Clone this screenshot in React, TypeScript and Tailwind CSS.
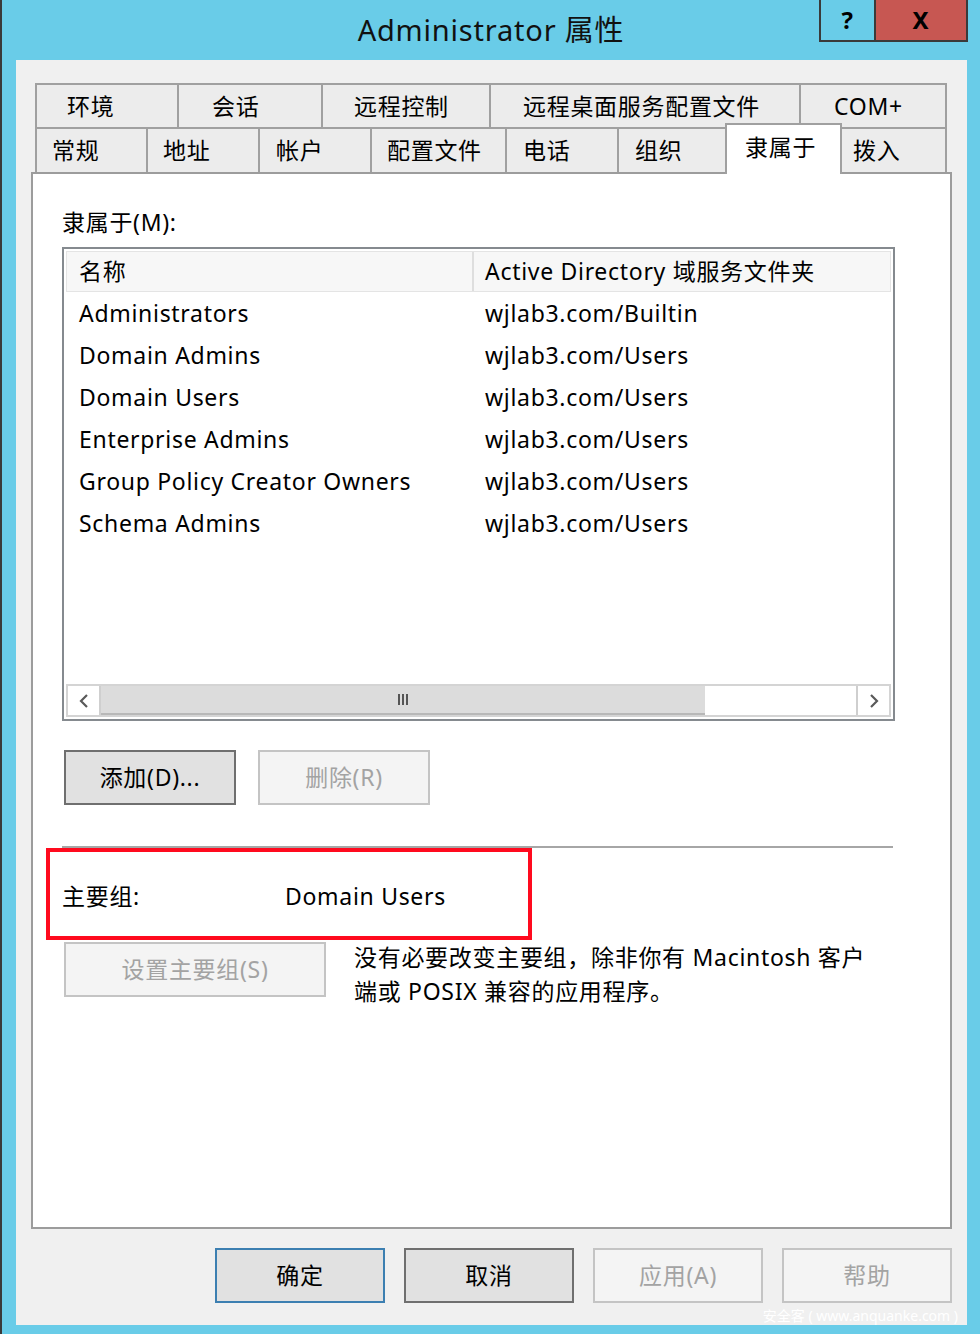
const FONT = "font-['Noto_Sans','Noto_Sans_CJK_SC',sans-serif]";

const rowOne = [
  { label: "环境", w: "w-[142px]", pl: "pl-[30px]" },
  { label: "会话", w: "w-[144px]", pl: "pl-[33px]" },
  { label: "远程控制", w: "w-[168px]", pl: "pl-[31px]" },
  { label: "远程桌面服务配置文件", w: "w-[310px]", pl: "pl-[32px]" },
  { label: "COM+", w: "w-[148px]", pl: "pl-[33px]" },
];

const rowTwo = [
  { label: "常规", w: "w-[111px]", pl: "pl-[15px]" },
  { label: "地址", w: "w-[112px]", pl: "pl-[15px]" },
  { label: "帐户", w: "w-[112px]", pl: "pl-[16px]" },
  { label: "配置文件", w: "w-[135px]", pl: "pl-[15px]" },
  { label: "电话", w: "w-[112px]", pl: "pl-[16px]" },
  { label: "组织", w: "w-[108px]", pl: "pl-[16px]" },
  { label: "隶属于", w: "w-[117px]", pl: "pl-[18px]", active: true },
  { label: "拨入", w: "w-[105px]", pl: "pl-[11px]" },
];

const groups = [
  ["Administrators", "wjlab3.com/Builtin"],
  ["Domain Admins", "wjlab3.com/Users"],
  ["Domain Users", "wjlab3.com/Users"],
  ["Enterprise Admins", "wjlab3.com/Users"],
  ["Group Policy Creator Owners", "wjlab3.com/Users"],
  ["Schema Admins", "wjlab3.com/Users"],
];

const Chevron = ({ dir }: { dir: "left" | "right" }) => (
  <svg width="12" height="16" viewBox="0 0 12 16">
    <polyline
      points={dir === "left" ? "9,2 3,8 9,14" : "3,2 9,8 3,14"}
      fill="none"
      stroke="#5a5a5a"
      strokeWidth="2.2"
    />
  </svg>
);

const Button = ({
  label,
  width,
  kind,
}: {
  label: string;
  width: string;
  kind: "normal" | "default" | "disabled";
}) => {
  const look =
    kind === "disabled"
      ? "bg-[#f4f4f4] border-[#c4c4c4] text-[#a3a3a3]"
      : kind === "default"
        ? "bg-[#e1e1e1] border-[#3c7fb1] text-black"
        : "bg-[#e1e1e1] border-[#6f6f6f] text-black";
  return (
    <div className={`${width} h-[55px] border-2 ${look} flex items-center justify-center`}>
      {label}
    </div>
  );
};

export default function App() {
  return (
    <div className={`w-[980px] h-[1334px] bg-[#69cce8] border-l-2 border-[#3a3a3a] flex flex-col text-[23px] tracking-[0.7px] ${FONT}`}>
      {/* title bar */}
      <div className="h-[60px] grid grid-cols-[1fr_auto_1fr] items-start">
        <div />
        <div className="text-[29px] tracking-[0.8px] leading-[60px] text-[#111]">Administrator 属性</div>
        <div className="flex justify-end pr-[12px]">
          <div className="w-[57px] h-[42px] border-2 border-t-0 border-[#3a3a3a] flex items-center justify-center text-[24px] font-bold text-black leading-none">
            ?
          </div>
          <div className="w-[92px] h-[42px] border-2 border-t-0 border-l-0 border-[#3a3a3a] bg-[#c75752] flex items-center justify-center text-[24px] font-bold text-black leading-none">
            X
          </div>
        </div>
      </div>

      {/* dialog body */}
      <div className="ml-[14px] w-[951px] h-[1265px] bg-[#f0f0f0] pt-[23px] px-[15px] flex flex-col">
        {/* tabs */}
        <div className="pl-[4px]">
          <div className="flex h-[44px]">
            {rowOne.map((t, i) => (
              <div
                key={t.label}
                className={`${t.w} ${t.pl} border-t-2 border-l-2 ${i === rowOne.length - 1 ? "border-r-2" : ""} border-[#a0a0a0] bg-[#ececec] flex items-center text-black whitespace-nowrap`}
              >
                {t.label}
              </div>
            ))}
          </div>
          <div className="flex h-[45px] items-stretch">
            {rowTwo.map((t, i) =>
              t.active ? (
                <div
                  key={t.label}
                  className={`${t.w} ${t.pl} self-end h-[51px] -mb-[2px] relative z-10 bg-white border-t-2 border-x-2 border-[#a0a0a0] flex items-center pb-[4px] text-black`}
                >
                  {t.label}
                </div>
              ) : (
                <div
                  key={t.label}
                  className={`${t.w} ${t.pl} border-t-2 ${rowTwo[i - 1]?.active ? "" : "border-l-2"} ${i === rowTwo.length - 1 ? "border-r-2" : ""} border-[#a0a0a0] bg-[#ececec] flex items-center text-black`}
                >
                  {t.label}
                </div>
              ),
            )}
          </div>
        </div>

        {/* tab page */}
        <div className="h-[1059px] bg-white border-2 border-[#9c9c9c] pt-[33px] px-[29px] flex flex-col text-black">
          <div className="leading-[30px]">隶属于(M):</div>

          <div className="mt-[10px] w-[833px] h-[474px] border-2 border-[#858a8f] p-[2px] flex flex-col">
            <div className="h-[41px] bg-[#f7f7f7] border border-[#e4e4e4] grid grid-cols-[407px_1fr] items-center">
              <div className="pl-[12px] border-r-2 border-[#dedede] h-full flex items-center">名称</div>
              <div className="pl-[11px] whitespace-nowrap">Active Directory 域服务文件夹</div>
            </div>
            {groups.map(([name, folder]) => (
              <div key={name} className="h-[42px] grid grid-cols-[409px_1fr] items-center">
                <div className="pl-[13px] whitespace-nowrap">{name}</div>
                <div className="pl-[10px]">{folder}</div>
              </div>
            ))}
            <div className="flex-1" />
            {/* horizontal scrollbar */}
            <div className="h-[33px] border-2 border-[#d4d4d4] flex">
              <div className="w-[33px] flex items-center justify-center border-r-2 border-[#cfcfcf]">
                <Chevron dir="left" />
              </div>
              <div className="w-[604px] bg-[#dcdcdc] border-b-2 border-[#b8b8b8] flex items-center justify-center gap-[2px]">
                <div className="w-[2px] h-[11px] bg-[#555]" />
                <div className="w-[2px] h-[11px] bg-[#555]" />
                <div className="w-[2px] h-[11px] bg-[#555]" />
              </div>
              <div className="flex-1" />
              <div className="w-[33px] flex items-center justify-center border-l-2 border-[#cfcfcf]">
                <Chevron dir="right" />
              </div>
            </div>
          </div>

          <div className="mt-[29px] flex gap-[22px] pl-[2px]">
            <Button label="添加(D)..." width="w-[172px]" kind="normal" />
            <Button label="删除(R)" width="w-[172px]" kind="disabled" />
          </div>

          <div className="mt-[41px] w-[831px] h-[2px] bg-[#a6a6a6]" />

          {/* annotation around primary group */}
          <div className="-ml-[16px] w-[486px] h-[92px] border-4 border-[#ff0a1e] grid grid-cols-[223px_1fr] items-center pl-[12px] pt-[4px]">
            <div>主要组:</div>
            <div>Domain Users</div>
          </div>

          <div className="mt-[2px] pl-[2px] flex items-start gap-[28px]">
            <Button label="设置主要组(S)" width="w-[262px]" kind="disabled" />
            <div className="-mt-[2px] leading-[34px] whitespace-nowrap">
              没有必要改变主要组，除非你有 Macintosh 客户
              <br />
              端或 POSIX 兼容的应用程序。
            </div>
          </div>
        </div>

        {/* dialog buttons */}
        <div className="mt-[19px] flex justify-end gap-[19px]">
          <Button label="确定" width="w-[170px]" kind="default" />
          <Button label="取消" width="w-[170px]" kind="normal" />
          <Button label="应用(A)" width="w-[170px]" kind="disabled" />
          <Button label="帮助" width="w-[170px]" kind="disabled" />
        </div>
        <div className="-mr-[6px] mt-[4px] text-right text-[14px] tracking-normal leading-[18px] text-white">
          安全客 ( www.anquanke.com )
        </div>
      </div>
    </div>
  );
}
